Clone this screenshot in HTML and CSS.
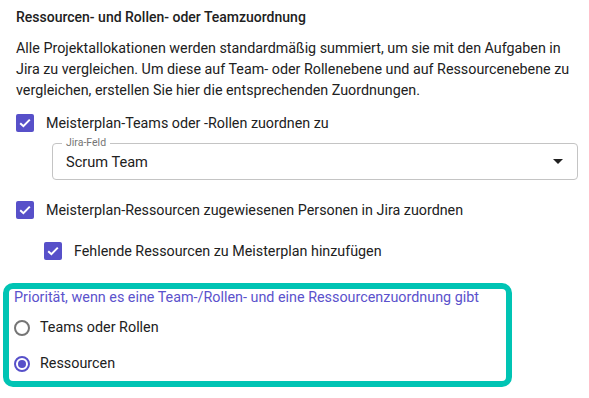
FILE: index.html
```html
<!DOCTYPE html>
<html lang="de">
<head>
    <meta charset="UTF-8">
    <title>Ressourcen- und Rollenzuordnung</title>
    <link rel="stylesheet" href="styles.css">
</head>
<body>
	<div class="page">
		<h4 class="title">Ressourcen- und Rollen- oder Teamzuordnung</h4>
		<p class="intro">Alle Projektallokationen werden standardmäßig summiert, um sie mit den Aufgaben in Jira zu vergleichen. Um diese auf Team- oder Rollenebene und auf Ressourcenebene zu vergleichen, erstellen Sie hier die entsprechenden Zuordnungen.</p>

		<label class="check">
			<span class="box"><svg width="12" height="10" viewBox="0 0 12 10"><path d="M1.2 5.2 4.4 8.2 10.8 1.6" fill="none" stroke="#fff" stroke-width="2"/></svg></span>
			Meisterplan-Teams oder -Rollen zuordnen zu
		</label>
		<div class="field">
			<span class="field-label">Jira-Feld</span>
			<span class="field-value">Scrum Team</span>
			<span class="arrow"></span>
		</div>

		<label class="check check-2">
			<span class="box"><svg width="12" height="10" viewBox="0 0 12 10"><path d="M1.2 5.2 4.4 8.2 10.8 1.6" fill="none" stroke="#fff" stroke-width="2"/></svg></span>
			Meisterplan-Ressourcen zugewiesenen Personen in Jira zuordnen
		</label>
		<label class="check sub">
			<span class="box"><svg width="12" height="10" viewBox="0 0 12 10"><path d="M1.2 5.2 4.4 8.2 10.8 1.6" fill="none" stroke="#fff" stroke-width="2"/></svg></span>
			Fehlende Ressourcen zu Meisterplan hinzufügen
		</label>
	</div>

	<div class="priority">
		<p class="priority-title">Priorität, wenn es eine Team-/Rollen- und eine Ressourcenzuordnung gibt</p>
		<label class="radio"><span class="dot"></span>Teams oder Rollen</label>
		<label class="radio on"><span class="dot"></span>Ressourcen</label>
	</div>
</body>
</html>
```

FILE: styles.css
```css
	html {
		overflow: hidden;
	}
	body {
		margin: 0;
		background: #fff;
		font-family: Roboto, "Liberation Sans", sans-serif;
		color: #212121;
	}
	.page {
		padding: 0 11px 0 16px;
	}
	.title {
		margin: 0;
		padding-top: 8px;
		font-size: 14px;
		font-weight: 500;
		line-height: 18px;
	}
	.intro {
		margin: 12px 0 0;
		font-size: 14.3px;
		line-height: 21px;
	}
	.check {
		display: flex;
		align-items: center;
		gap: 12px;
		font-size: 14.3px;
		line-height: 20px;
		margin-top: 12px;
	}
	.box {
		width: 18px;
		height: 18px;
		border-radius: 2px;
		background: #5750c9;
		display: flex;
		align-items: center;
		justify-content: center;
		flex: none;
	}
	.field {
		position: relative;
		margin: 10px 0 0 36px;
		height: 35px;
		border: 1px solid #c4c4c4;
		border-radius: 4px;
		display: flex;
		align-items: center;
		padding: 0 14px 0 13px;
	}
	.field-label {
		position: absolute;
		left: 9px;
		top: -7px;
		padding: 0 4px;
		background: #fff;
		font-size: 10.5px;
		line-height: 12px;
		color: #757575;
	}
	.field-value {
		flex: 1;
		font-size: 14.6px;
		margin-top: 1px;
	}
	.arrow {
		width: 0;
		height: 0;
		border-left: 5px solid transparent;
		border-right: 5px solid transparent;
		border-top: 5px solid #212121;
	}
	.check-2 {
		margin-top: 20px;
	}
	.sub {
		margin: 21px 0 0 28px;
	}
	.priority {
		margin: 22px 0 0 3px;
		width: 492px;
		height: 92px;
		border: 6px solid #00c4b4;
		border-radius: 10px;
		padding: 0 0 0 5px;
	}
	.priority-title {
		margin: 0;
		font-size: 14.35px;
		line-height: 18px;
		color: #5b52cc;
	}
	.radio {
		display: flex;
		align-items: center;
		gap: 10px;
		font-size: 14.35px;
		line-height: 20px;
		margin-top: 11px;
	}
	.radio + .radio {
		margin-top: 16px;
	}
	.dot {
		width: 12px;
		height: 12px;
		border: 2px solid #757575;
		border-radius: 50%;
		position: relative;
		flex: none;
	}
	.on .dot {
		border-color: #5750c9;
	}
	.on .dot:after {
		content: "";
		position: absolute;
		left: 2px;
		top: 2px;
		width: 8px;
		height: 8px;
		border-radius: 50%;
		background: #5750c9;
	}
```
